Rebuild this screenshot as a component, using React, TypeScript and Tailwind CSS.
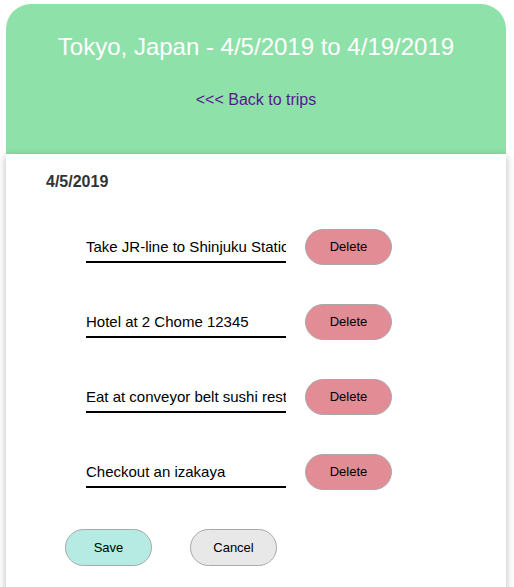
import React from "react";

const items = [
  "Take JR-line to Shinjuku Station",
  "Hotel at 2 Chome 12345",
  "Eat at conveyor belt sushi restaurant",
  "Checkout an izakaya",
];

export default function App() {
  return (
    <div className="min-h-[587px] bg-white pt-[4px]" style={{ fontFamily: '"Liberation Sans", Arial, sans-serif' }}>
      <div className="ml-[6px] w-[500px]">
        <div className="flex h-[150px] flex-col items-center rounded-t-[25px] bg-[#8fe1aa] pt-[29px]">
          <h1 className="text-[24px] leading-[28px] text-white">Tokyo, Japan - 4/5/2019 to 4/19/2019</h1>
          <a href="#" className="mt-[30px] text-[16px] leading-[18px] text-[#551a8b]">&lt;&lt;&lt; Back to trips</a>
        </div>
        <div className="min-h-[440px] bg-white pl-[40px] pt-[19px] shadow-[0_2px_8px_rgba(0,0,0,0.28)]">
          <div className="text-[16px] font-bold leading-[18px] text-[#333]">4/5/2019</div>
          <div className="mt-[38px] flex flex-col gap-[39px] pl-[40px]">
            {items.map((t) => (
              <div key={t} className="flex items-center gap-[19px]">
                <input
                  readOnly
                  defaultValue={t}
                  className="mt-[1px] h-[30px] w-[200px] border-b-2 border-black bg-transparent p-0 text-[15px] text-black outline-none"
                  style={{ fontFamily: '"Liberation Sans", Arial, sans-serif' }}
                />
                <button className="h-[36px] w-[87px] rounded-full border border-[#a9a9a9] bg-[#e28c96] text-[13px] text-black">
                  Delete
                </button>
              </div>
            ))}
          </div>
          <div className="mt-[39px] flex gap-[38px] pl-[19px]">
            <button className="h-[37px] w-[87px] rounded-full border border-[#a9a9a9] bg-[#b5ebe3] text-[13px] text-black">
              Save
            </button>
            <button className="h-[37px] w-[87px] rounded-full border border-[#a9a9a9] bg-[#e8e8e8] text-[13px] text-black">
              Cancel
            </button>
          </div>
        </div>
      </div>
    </div>
  );
}
